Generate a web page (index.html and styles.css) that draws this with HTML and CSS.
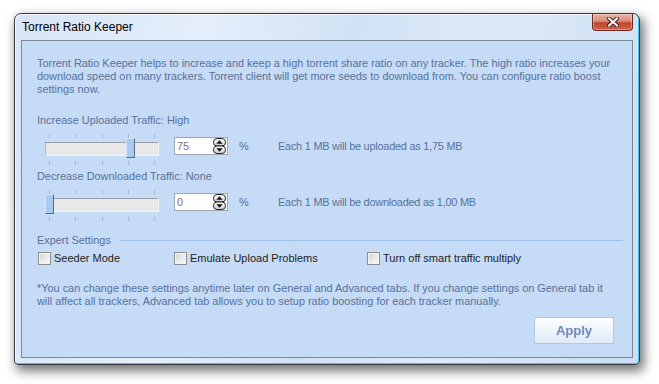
FILE: index.html
```html
<!DOCTYPE html>
<html>
<head>
<meta charset="utf-8">
<link rel="stylesheet" href="styles.css">
</head>
<body>
<div class="window">
  <div class="titlebar">
    <span class="title">Torrent Ratio Keeper</span>
    <div class="close">
      <svg width="12" height="10" viewBox="0 0 12 10">
        <path d="M2 1.5 L10 8.5 M10 1.5 L2 8.5" stroke="#4a1d16" stroke-width="4" stroke-linecap="square"/>
        <path d="M2 1.5 L10 8.5 M10 1.5 L2 8.5" stroke="#fff" stroke-width="2" stroke-linecap="square"/>
      </svg>
    </div>
  </div>
  <div class="panel">
    <p class="intro">Torrent Ratio Keeper helps to increase and keep a high torrent share ratio on any tracker. The high ratio increases your<br>download speed on many trackers. Torrent client will get more seeds to download from. You can configure ratio boost<br>settings now.</p>

    <div class="label first">Increase Uploaded Traffic: High</div>
    <div class="row">
      <div class="slider">
        <div class="ticks"><i></i><i></i><i></i><i></i><i></i></div>
        <div class="track"></div>
        <div class="ticks bottom"><i></i><i></i><i></i><i></i><i></i></div>
        <div class="thumb" style="left:81px"></div>
      </div>
      <div class="spin">
        <span class="val">75</span>
        <svg class="arrows" width="13" height="16" viewBox="0 0 13 16">
          <defs>
            <linearGradient id="g1" x1="0" y1="0" x2="0" y2="1">
              <stop offset="0" stop-color="#ffffff"/>
              <stop offset="1" stop-color="#c9c9c9"/>
            </linearGradient>
          </defs>
          <rect x="0.5" y="0.5" width="12" height="7.5" rx="3.5" fill="url(#g1)" stroke="#262626"/>
          <rect x="0.5" y="8" width="12" height="7.5" rx="3.5" fill="url(#g1)" stroke="#262626"/>
          <path d="M6.5 2.3 L9.6 5.8 H3.4 Z" fill="#111"/>
          <path d="M6.5 13.7 L9.6 10.2 H3.4 Z" fill="#111"/>
        </svg>
      </div>
      <span class="pct">%</span>
      <span class="each">Each 1 MB will be uploaded as 1,75 MB</span>
    </div>

    <div class="label second">Decrease Downloaded Traffic: None</div>
    <div class="row row2">
      <div class="slider">
        <div class="ticks"><i></i><i></i><i></i><i></i><i></i></div>
        <div class="track"></div>
        <div class="ticks bottom"><i></i><i></i><i></i><i></i><i></i></div>
        <div class="thumb" style="left:0px"></div>
      </div>
      <div class="spin">
        <span class="val">0</span>
        <svg class="arrows" width="13" height="16" viewBox="0 0 13 16">
          <defs>
            <linearGradient id="g2" x1="0" y1="0" x2="0" y2="1">
              <stop offset="0" stop-color="#ffffff"/>
              <stop offset="1" stop-color="#c9c9c9"/>
            </linearGradient>
          </defs>
          <rect x="0.5" y="0.5" width="12" height="7.5" rx="3.5" fill="url(#g2)" stroke="#262626"/>
          <rect x="0.5" y="8" width="12" height="7.5" rx="3.5" fill="url(#g2)" stroke="#262626"/>
          <path d="M6.5 2.3 L9.6 5.8 H3.4 Z" fill="#111"/>
          <path d="M6.5 13.7 L9.6 10.2 H3.4 Z" fill="#111"/>
        </svg>
      </div>
      <span class="pct">%</span>
      <span class="each">Each 1 MB will be downloaded as 1,00 MB</span>
    </div>

    <div class="expert">
      <span>Expert Settings</span>
      <div class="sep"></div>
    </div>
    <div class="checks">
      <label class="check"><span class="box"></span><span>Seeder Mode</span></label>
      <label class="check"><span class="box"></span><span>Emulate Upload Problems</span></label>
      <label class="check"><span class="box"></span><span>Turn off smart traffic multiply</span></label>
    </div>

    <p class="note">*You can change these settings anytime later on General and Advanced tabs. If you change settings on General tab it<br>will affect all trackers, Advanced tab allows you to setup ratio boosting for each tracker manually.</p>

    <div class="actions">
      <button class="apply">Apply</button>
    </div>
  </div>
</div>
</body>
</html>
```

FILE: styles.css
```css
html, body {
  margin: 0;
}
body {
  width: 659px;
  height: 384px;
  box-sizing: border-box;
  padding: 13px 0 0 14px;
  background: #ffffff;
  font-family: "Liberation Sans", Arial, sans-serif;
  overflow: hidden;
}
.window {
  width: 626px;
  height: 352px;
  box-sizing: border-box;
  border: 1px solid #353b44;
  border-radius: 7px 7px 4px 4px;
  padding: 0 6px;
  display: flex;
  flex-direction: column;
  background: linear-gradient(100deg, #d6e5f7 0%, #e4eefa 28%, #d2e2f5 50%, #dde9f8 70%, #cddff4 100%);
  box-shadow: 3px 5px 11px 1px rgba(0, 0, 0, 0.55), inset -1px -1px 0 #45c3ec, inset 1px 1px 0 rgba(255, 255, 255, 0.75);
}
.titlebar {
  height: 26px;
  flex: none;
  display: flex;
  justify-content: space-between;
  align-items: flex-start;
}
.title {
  margin: 6px 0 0 1px;
  font-size: 12px;
  line-height: 15px;
  color: #000;
}
.close {
  width: 41px;
  height: 17px;
  box-sizing: border-box;
  border: 1px solid #6a2a22;
  border-top: none;
  border-radius: 0 0 4px 4px;
  background: linear-gradient(180deg, #e8b3a9 0%, #d98d7c 45%, #c3452d 55%, #cf6048 100%);
  box-shadow: inset 0 0 0 1px rgba(255, 255, 255, 0.35);
  display: flex;
  align-items: center;
  justify-content: center;
}
.panel {
  height: 318px;
  flex: none;
  box-sizing: border-box;
  border: 1px solid #7a8797;
  background: #c6dbf5;
  padding: 16px 9px 0 15px;
  color: #56729c;
  font-size: 10.9px;
  line-height: 13px;
}
.intro, .note {
  margin: 0;
  white-space: nowrap;
}
.label {
  white-space: nowrap;
}
.label.first {
  margin-top: 18px;
}
.label.second {
  margin-top: 5px;
}
.row {
  display: flex;
  align-items: flex-start;
  margin-top: 7px;
  height: 31px;
}
.slider {
  position: relative;
  width: 114px;
  height: 31px;
  margin-left: 8px;
  display: flex;
  flex-direction: column;
}
.ticks {
  height: 4px;
  display: flex;
  justify-content: space-between;
  padding: 0 4px;
}
.ticks i {
  width: 1px;
  height: 4px;
  background: #a9b8cb;
}
.ticks.bottom {
  margin-top: 5px;
}
.track {
  margin-top: 4px;
  height: 14px;
  box-sizing: border-box;
  background: #e8e8e8;
  border-top: 1px solid #9aa0a8;
  border-left: 1px solid #b4b9c0;
  border-bottom: 1px solid #f4f4f4;
  border-right: 1px solid #f4f4f4;
}
.thumb {
  position: absolute;
  top: 4px;
  width: 9px;
  height: 20px;
  box-sizing: border-box;
  background: #a8c9f2;
  border-top: 1px solid #d6e6fa;
  border-left: 1px solid #d6e6fa;
  border-right: 1px solid #5d6878;
  border-bottom: 1px solid #5d6878;
}
.spin {
  margin: 3px 0 0 15px;
  width: 54px;
  height: 18px;
  box-sizing: border-box;
  border: 1px solid #9ea7b2;
  background: #ffffff;
  display: flex;
  align-items: center;
  justify-content: space-between;
  padding: 0 1px 0 2px;
}
.val {
  color: #7d7167;
  line-height: 16px;
}
.arrows {
  display: block;
}
.pct {
  width: 39px;
  margin: 6px 0 0 11px;
}
.each {
  margin-top: 6px;
  white-space: nowrap;
  letter-spacing: -0.22px;
}
.expert {
  margin-top: 13px;
  display: flex;
  align-items: center;
  height: 13px;
}
.expert span {
  white-space: nowrap;
}
.sep {
  flex: 1;
  height: 1px;
  margin-left: 9px;
  background: #9ebee7;
}
.checks {
  margin-top: 5px;
  padding-left: 1px;
  display: grid;
  grid-template-columns: 136px 193px auto;
  height: 13px;
}
.check {
  display: flex;
  align-items: center;
  gap: 3px;
  color: #1e1e1e;
  font-size: 11px;
  line-height: 13px;
  white-space: nowrap;
}
.box {
  width: 13px;
  height: 13px;
  box-sizing: border-box;
  border: 1px solid #8e8f8f;
  background: linear-gradient(135deg, #d2d2d2 0%, #eeeeee 60%, #fbfbfb 100%);
  box-shadow: inset 0 0 0 1px #f4f4f4;
  flex: none;
}
.note {
  margin-top: 17px;
}
.actions {
  display: flex;
  justify-content: flex-end;
  margin-top: 9px;
  padding-right: 9px;
}
.apply {
  width: 80px;
  height: 27px;
  box-sizing: border-box;
  border: 1px solid #aac9ee;
  background: linear-gradient(180deg, #fdfeff 0%, #eef4fc 50%, #e0eaf8 100%);
  color: #6f8ab7;
  font-family: "Liberation Sans", Arial, sans-serif;
  font-weight: bold;
  font-size: 13px;
  padding: 0;
}
```
